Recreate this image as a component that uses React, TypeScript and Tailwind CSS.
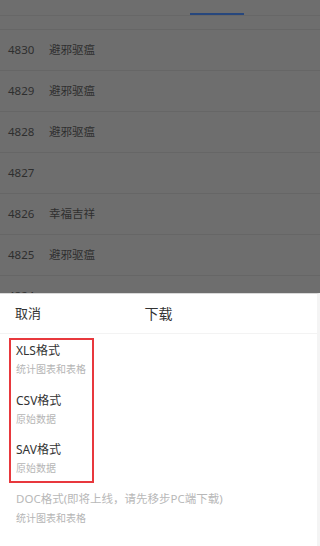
const rows = [
  { id: "4830", name: "避邪驱瘟" },
  { id: "4829", name: "避邪驱瘟" },
  { id: "4828", name: "避邪驱瘟" },
  { id: "4827", name: "" },
  { id: "4826", name: "幸福吉祥" },
  { id: "4825", name: "避邪驱瘟" },
  { id: "4824", name: "" },
];

const formats = [
  { title: "XLS格式", desc: "统计图表和表格" },
  { title: "CSV格式", desc: "原始数据" },
  { title: "SAV格式", desc: "原始数据" },
];

const font = { fontFamily: '"Noto Sans", "Noto Sans CJK SC", sans-serif' };

export default function App() {
  return (
    <div
      className="relative w-[320px] h-[546px] overflow-hidden bg-[#6e6e6e]"
      style={font}
    >
      {/* page under the mask */}
      <div className="h-[16px] border-b border-[#676767] relative">
        <div className="absolute left-[190px] top-[13px] w-[54px] h-[2px] bg-[#27477d]" />
      </div>
      <div className="h-[13px]" />
      {rows.map((row) => (
        <div
          key={row.id}
          className="h-[41px] border-t border-[#666666] flex items-center text-[11.5px] text-[#2e2e2e]"
        >
          <span className="w-[49px] pl-[8px]">{row.id}</span>
          <span>{row.name}</span>
        </div>
      ))}

      {/* bottom sheet */}
      <div className="absolute left-0 right-0 bottom-0 h-[253px] bg-white border-t border-[#d9d9d9] border-r-[3px] border-r-[#f4f4f4]">
        <div className="relative h-[40px] border-b border-[#f3f3f3] flex items-center">
          <span className="pl-[15px] text-[13px] text-[#333]">取消</span>
          <span className="absolute left-0 right-0 text-center text-[14px] text-[#333]">
            下载
          </span>
        </div>
        <div className="ml-[9px] mt-[4px] w-[85px] border-2 border-[#e8383d] pt-[2px] pb-[4px] pl-[5px] flex flex-col gap-[13.5px]">
          {formats.map((f) => (
            <div key={f.title}>
              <div className="text-[12px] leading-[18px] text-[#333]">{f.title}</div>
              <div className="text-[10px] leading-[18px] text-[#b5b5b5] whitespace-nowrap">
                {f.desc}
              </div>
            </div>
          ))}
        </div>
        <div className="pl-[16px] mt-[7px]">
          <div className="text-[11.5px] leading-[18px] text-[#b8b8b8] whitespace-nowrap">
            DOC格式(即将上线，请先移步PC端下载)
          </div>
          <div className="text-[10px] leading-[20px] text-[#b5b5b5]">统计图表和表格</div>
        </div>
      </div>
    </div>
  );
}
